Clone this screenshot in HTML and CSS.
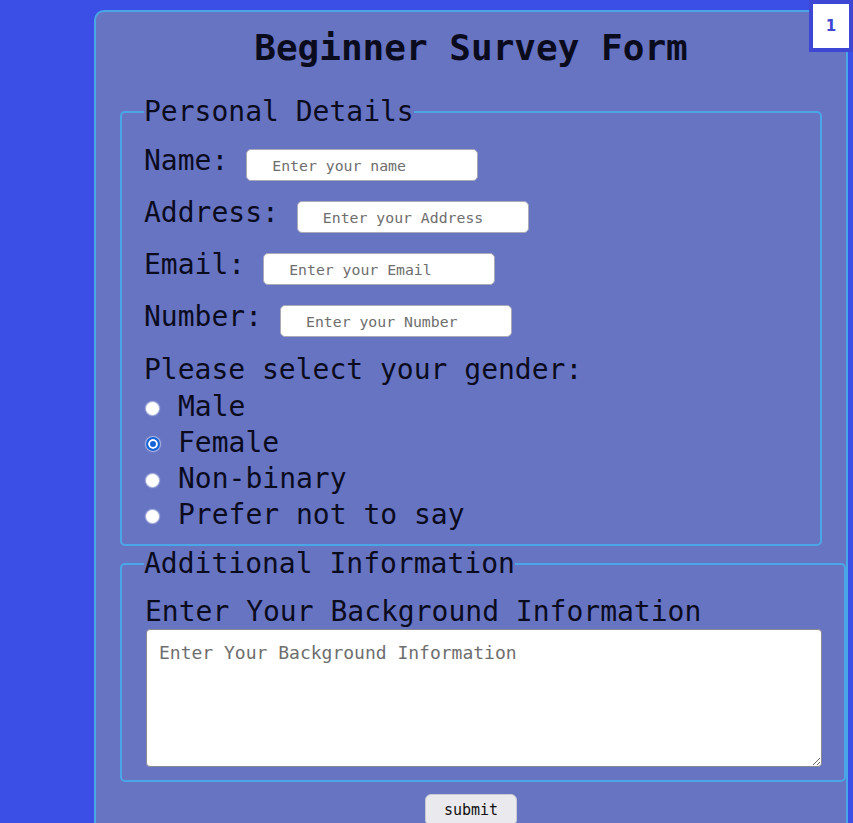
FILE: index.html
```html
<!DOCTYPE html>
<html lang="en">
<head>
<meta charset="utf-8">
<title>Beginner Survey Form</title>
<link rel="stylesheet" href="styles.css">
</head>
<body>
<div class="badge">1</div>
<main class="card">
  <h1 class="title">Beginner Survey Form</h1>
  <form class="form">
    <fieldset class="group group-personal">
      <legend class="legend">Personal Details</legend>
      <div class="row">
        <label class="label" for="name">Name:</label>
        <input class="field" id="name" type="text" placeholder="Enter your name">
      </div>
      <div class="row">
        <label class="label" for="address">Address:</label>
        <input class="field" id="address" type="text" placeholder="Enter your Address">
      </div>
      <div class="row">
        <label class="label" for="email">Email:</label>
        <input class="field" id="email" type="email" placeholder="Enter your Email">
      </div>
      <div class="row">
        <label class="label" for="number">Number:</label>
        <input class="field" id="number" type="text" placeholder="Enter your Number">
      </div>
      <p class="question">Please select your gender:</p>
      <label class="option"><input class="radio" type="radio" name="gender">Male</label>
      <label class="option"><input class="radio" type="radio" name="gender" checked>Female</label>
      <label class="option"><input class="radio" type="radio" name="gender">Non-binary</label>
      <label class="option"><input class="radio" type="radio" name="gender">Prefer not to say</label>
    </fieldset>
    <fieldset class="group group-extra">
      <legend class="legend">Additional Information</legend>
      <label class="area-label" for="bg">Enter Your Background Information</label>
      <textarea class="area" id="bg" placeholder="Enter Your Background Information"></textarea>
    </fieldset>
    <div class="actions">
      <button class="submit" type="submit">submit</button>
    </div>
  </form>
</main>
</body>
</html>
```

FILE: styles.css
```css
html, body {
  margin: 0;
  padding: 0;
  height: 823px;
  overflow: hidden;
}

body {
  background: #3b4ee6;
  font-family: "DejaVu Sans Mono", "Liberation Mono", monospace;
  color: #0b0b1e;
}

.badge {
  position: absolute;
  left: 809px;
  top: 0;
  width: 36px;
  height: 44px;
  border: 4px solid #3d47d3;
  background: #ffffff;
  color: #3d47d3;
  font-family: "DejaVu Sans", sans-serif;
  font-weight: bold;
  font-size: 15px;
  display: flex;
  align-items: center;
  justify-content: center;
  z-index: 5;
}

.card {
  margin: 10px 0 0 94px;
  width: 750px;
  border: 2px solid #4aa6e6;
  border-radius: 10px;
  background: #6774c2;
  padding-bottom: 40px;
}

.title {
  margin: 16px 0 28px;
  font-size: 36px;
  line-height: 40px;
  font-weight: bold;
  text-align: center;
}

.form {
  margin: 0;
}

.group {
  border: 2px solid #4aa6e6;
  border-radius: 5px;
  margin: 0 24px;
  padding: 0 22px 12px;
  min-width: 0;
}

.group-extra {
  margin: 2px 0 0 24px;
  padding-bottom: 13px;
}

.legend {
  padding: 0;
  font-size: 28px;
  line-height: 32px;
}

.row {
  display: flex;
  align-items: flex-start;
  height: 36px;
  margin-top: 16px;
}

.row:first-of-type {
  margin-top: 17px;
}

.label {
  font-size: 28px;
  line-height: 32px;
  margin-right: 18px;
}

.field {
  box-sizing: border-box;
  width: 232px;
  height: 32px;
  border: 1px solid #a9a9b8;
  border-radius: 5px;
  background: #ffffff;
  padding: 0 0 0 25px;
  font-family: "DejaVu Sans Mono", "Liberation Mono", monospace;
  font-size: 14.8px;
  margin-top: 4px;
}

.field::placeholder,
.area::placeholder {
  color: #6e6e6e;
}

.question {
  margin: 17px 0 2px;
  font-size: 28px;
  line-height: 32px;
}

.option {
  display: flex;
  align-items: center;
  height: 36px;
  font-size: 28px;
}

.radio {
  appearance: none;
  -webkit-appearance: none;
  width: 13px;
  height: 13px;
  margin: 4px 19px 0 2px;
  border-radius: 50%;
  background: #ffffff;
  box-shadow: 0 0 1px 1px rgba(255, 255, 255, 0.5);
  flex: none;
}

.radio:checked {
  width: 14px;
  height: 14px;
  background: #1665d8;
  border: 2px solid #1665d8;
  box-shadow: inset 0 0 0 2px #ffffff, 0 0 1px 1px rgba(255, 255, 255, 0.5);
  margin-right: 18px;
}

.area-label {
  display: block;
  margin: 16px 0 1px 1px;
  font-size: 28px;
  line-height: 32px;
}

.area {
  display: block;
  box-sizing: border-box;
  width: 676px;
  height: 138px;
  margin-left: 2px;
  border: 1px solid #8a8a96;
  border-radius: 4px;
  background: #ffffff;
  padding: 12px 12px;
  font-family: "DejaVu Sans Mono", "Liberation Mono", monospace;
  font-size: 18px;
  line-height: 22px;
}

.actions {
  display: flex;
  justify-content: center;
  margin-top: 12px;
}

.submit {
  width: 92px;
  height: 32px;
  border: 1px solid #c9c9d3;
  border-radius: 6px;
  background: #e9e9ee;
  color: #111;
  font-family: "DejaVu Sans Mono", "Liberation Mono", monospace;
  font-size: 15px;
}
```
